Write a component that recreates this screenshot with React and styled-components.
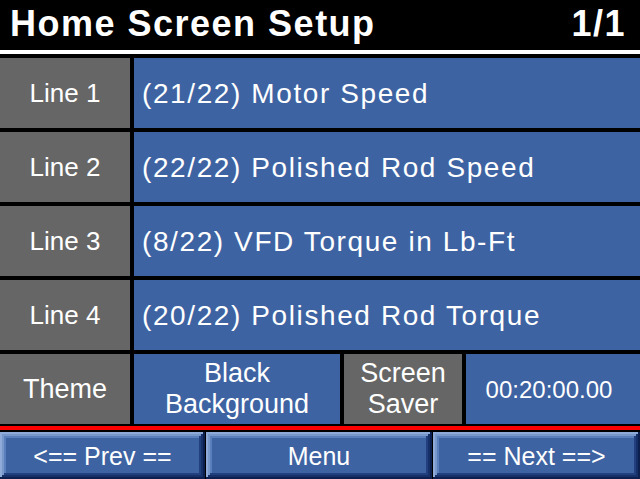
import React from 'react';
import styled, { createGlobalStyle } from 'styled-components';

const GlobalStyle = createGlobalStyle`
  html, body {
    margin: 0;
    padding: 0;
    background: #000;
  }
  body {
    font-family: 'Liberation Sans', Arial, sans-serif;
    color: #fff;
  }
`;

const Screen = styled.div`
  width: 640px;
  height: 479px;
  background: #000;
  display: flex;
  flex-direction: column;
  overflow: hidden;
`;

const Header = styled.div`
  height: 50px;
  display: flex;
  align-items: center;
  justify-content: space-between;
  padding: 0 14px 0 10px;
  font-size: 36px;
  font-weight: bold;
  letter-spacing: 1.5px;
  line-height: 1;
  border-bottom: 4px solid #fff;
  margin-bottom: 4px;

  span {
    margin-top: -2px;
  }
`;

const Table = styled.div`
  display: flex;
  flex-direction: column;
  gap: 4px;
`;

const Row = styled.div`
  height: 70px;
  display: grid;
  grid-template-columns: ${(p) => p.$cols || '130px 1fr'};
  gap: 4px;
`;

const Cell = styled.div`
  background: ${(p) => (p.$gray ? '#666666' : '#3e63a2')};
  display: flex;
  align-items: center;
  justify-content: ${(p) => (p.$left ? 'flex-start' : 'center')};
  text-align: center;
  padding-left: ${(p) => (p.$left ? '8px' : '0')};
  padding-right: ${(p) => p.$shift || 0}px;
  font-size: ${(p) => p.$size || 27}px;
  letter-spacing: ${(p) => p.$spacing || 0}px;
  line-height: 31px;
  white-space: pre-line;
`;

const RedRule = styled.div`
  height: 4px;
  background: #ff0000;
  border-top: 2px solid #000;
  border-bottom: 2px solid #000;
`;

const ButtonBar = styled.div`
  flex: 1;
  display: grid;
  grid-template-columns: 205px 226px 1fr;
  gap: 1px;
  background: #000;
`;

const NavButton = styled.div`
  background: #3e63a2;
  display: flex;
  align-items: center;
  justify-content: center;
  font-size: 25px;
  padding-top: 1px;
  box-shadow:
    inset -2px -2px 0 #0c1f4e,
    inset 2px 2px 0 #8eaad8,
    inset -4px -4px 0 #16306a,
    inset 4px 4px 0 #7898cc,
    inset -6px -6px 0 #22407e,
    inset 6px 6px 0 #5a7fbd;
`;

const lines = [
  '(21/22) Motor Speed',
  '(22/22) Polished Rod Speed',
  '(8/22) VFD Torque in Lb-Ft',
  '(20/22) Polished Rod Torque',
];

export default function App() {
  return (
    <>
      <GlobalStyle />
      <Screen>
        <Header>
          <span>Home Screen Setup</span>
          <span>1/1</span>
        </Header>
        <Table>
          {lines.map((text, i) => (
            <Row key={i}>
              <Cell $gray $size={26}>Line {i + 1}</Cell>
              <Cell $left $size={28} $spacing={1.6}>{text}</Cell>
            </Row>
          ))}
          <Row $cols="130px 206px 118px 1fr">
            <Cell $gray>Theme</Cell>
            <Cell>{'Black\nBackground'}</Cell>
            <Cell $gray>{'Screen\nSaver'}</Cell>
            <Cell $size={24} $shift={8}>00:20:00.00</Cell>
          </Row>
        </Table>
        <RedRule />
        <ButtonBar>
          <NavButton>{'<== Prev =='}</NavButton>
          <NavButton>Menu</NavButton>
          <NavButton>{'== Next ==>'}</NavButton>
        </ButtonBar>
      </Screen>
    </>
  );
}
